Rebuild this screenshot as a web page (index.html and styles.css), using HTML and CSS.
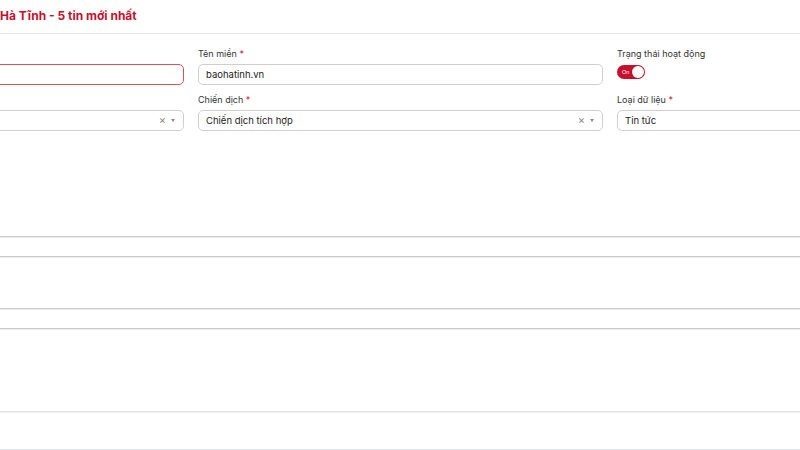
FILE: index.html
```html
<!DOCTYPE html>
<html lang="vi">
  <head>
    <meta charset="UTF-8" />
    <meta name="viewport" content="width=device-width, initial-scale=1.0" />
    <title>Hà Tĩnh - 5 tin mới nhất</title>
    <link rel="stylesheet" href="styles.css">
  </head>
  <body>
    <main class="page">
      <header class="page-header">
        <h1 class="page-title">Hà Tĩnh - 5 tin mới nhất</h1>
      </header>

      <form class="source-form">
        <div class="form-field">
          <label class="field-label">&nbsp;</label>
          <input class="field-input is-invalid" type="text" value="" aria-label="Tên nguồn" />
        </div>
        <div class="form-field">
          <label class="field-label">Tên miền <span class="required">*</span></label>
          <input class="field-input" type="text" value="baohatinh.vn" />
        </div>
        <div class="form-field">
          <label class="field-label">Trạng thái hoạt động</label>
          <button type="button" class="switch is-on" aria-label="Trạng thái">
            <span class="switch-text">On</span>
            <span class="switch-knob"></span>
          </button>
        </div>

        <div class="form-field">
          <label class="field-label">&nbsp;</label>
          <div class="field-select">
            <span class="select-value"></span>
            <span class="select-clear">×</span>
            <span class="select-caret"></span>
          </div>
        </div>
        <div class="form-field">
          <label class="field-label">Chiến dịch <span class="required">*</span></label>
          <div class="field-select">
            <span class="select-value">Chiến dịch tích hợp</span>
            <span class="select-clear">×</span>
            <span class="select-caret"></span>
          </div>
        </div>
        <div class="form-field">
          <label class="field-label">Loại dữ liệu <span class="required">*</span></label>
          <div class="field-select">
            <span class="select-value">Tin tức</span>
          </div>
        </div>
      </form>

      <section class="rules">
        <div class="rules-head"></div>
        <div class="rules-body is-short"></div>
        <div class="rules-head"></div>
        <div class="rules-body is-tall"></div>
        <div class="rules-footer"></div>
      </section>
    </main>
  </body>
</html>
```

FILE: styles.css
```css
:root {
  --brand: #c8102e;
  --text: #2b2b2b;
  --muted: #8a8a8a;
  --border: #cfcfcf;
  --line: #e5e7eb;
}

*,
*::before,
*::after {
  box-sizing: border-box;
  margin: 0;
  padding: 0;
}

body {
  font-family: Inter, "Noto Sans", sans-serif;
  color: var(--text);
  background: #fff;
  overflow: hidden;
  width: 800px;
  height: 450px;
}

.page {
  width: 800px;
}

.page-header {
  height: 34px;
  border-bottom: 1px solid var(--line);
  padding-top: 8px;
}

.page-title {
  font-size: 12px;
  font-weight: 700;
  color: var(--brand);
  line-height: 16px;
  white-space: nowrap;
}

.source-form {
  display: grid;
  grid-template-columns: 405px 405px 405px;
  column-gap: 14px;
  row-gap: 8px;
  margin-left: -221px;
  padding-top: 13px;
}

.form-field {
  display: flex;
  flex-direction: column;
  align-items: flex-start;
  gap: 3px;
}

.field-label {
  font-size: 9px;
  line-height: 14px;
  color: #333;
  white-space: nowrap;
}

.required {
  color: var(--brand);
}

.field-input,
.field-select {
  width: 100%;
  height: 21px;
  border: 1px solid var(--border);
  border-radius: 5px;
  padding: 0 7px;
  font: inherit;
  font-size: 9.5px;
  color: #222;
  background: #fff;
  outline: none;
}

.field-input.is-invalid {
  border: 1px solid #d9535f;
}

.field-select {
  display: flex;
  align-items: center;
  gap: 5px;
}

.select-value {
  flex: 1;
  white-space: nowrap;
}

.select-clear {
  color: var(--muted);
  font-size: 11px;
  line-height: 1;
}

.select-caret {
  width: 0;
  height: 0;
  border-left: 2.5px solid transparent;
  border-right: 2.5px solid transparent;
  border-top: 3px solid var(--muted);
  margin-right: 1px;
}

.switch {
  position: relative;
  width: 28px;
  height: 14px;
  border: none;
  border-radius: 7px;
  background: var(--brand);
  margin-top: 1px;
  cursor: pointer;
}

.switch-text {
  position: absolute;
  left: 5px;
  top: 3px;
  font-size: 5.5px;
  line-height: 8px;
  color: #fff;
}

.switch-knob {
  position: absolute;
  right: 1px;
  top: 1px;
  width: 12px;
  height: 12px;
  border-radius: 50%;
  background: #fff;
}

.rules {
  margin-top: 105px;
}

.rules-head,
.rules-body {
  border-top: 1px solid #cbcbcb;
  box-shadow: inset 0 1px 0 #ececec;
}

.rules-head {
  height: 20px;
}

.rules-body.is-short {
  height: 52px;
}

.rules-body.is-tall {
  height: 83px;
}

.rules-footer {
  height: 39px;
  border-top: 1px solid #e2e2ea;
  border-bottom: 1px solid #dde6ec;
  box-shadow: inset 0 1px 0 #f0f0f5;
}
```
